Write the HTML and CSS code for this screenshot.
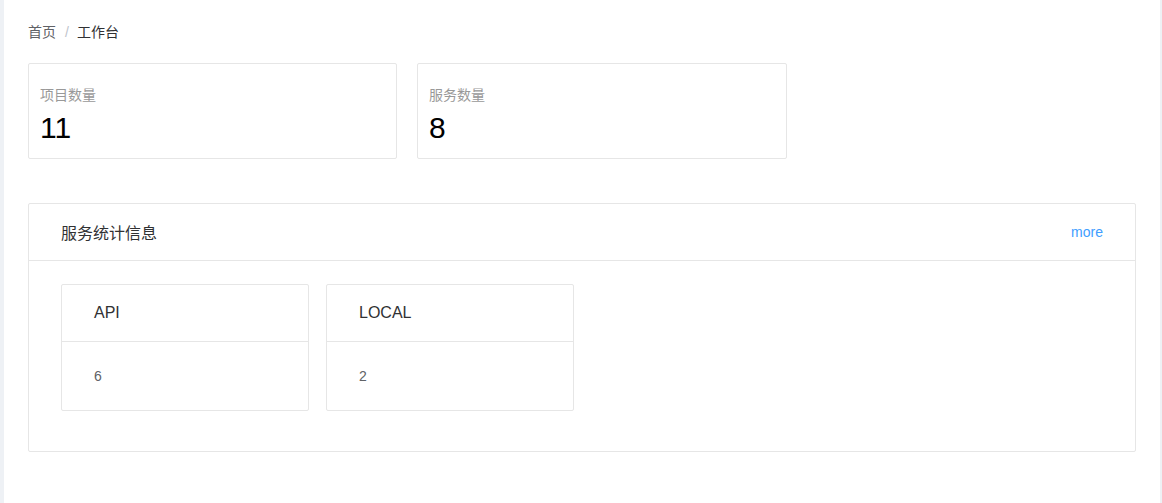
FILE: index.html
```html
<!DOCTYPE html>
<html lang="zh">
<head>
<meta charset="utf-8">
<title>工作台</title>
<link rel="stylesheet" href="styles.css">
</head>
<body>
<main class="main">
  <nav class="breadcrumb">
    <span class="crumb crumb-link">首页</span>
    <span class="crumb-sep">/</span>
    <span class="crumb crumb-current">工作台</span>
  </nav>
  <section class="stats">
    <div class="stat-card">
      <div class="stat-label">项目数量</div>
      <div class="stat-value">11</div>
    </div>
    <div class="stat-card stat-card-wide">
      <div class="stat-label">服务数量</div>
      <div class="stat-value">8</div>
    </div>
  </section>
  <section class="panel">
    <header class="panel-header">
      <span class="panel-title">服务统计信息</span>
      <a class="panel-more">more</a>
    </header>
    <div class="panel-body">
      <div class="svc-card">
        <div class="svc-head">API</div>
        <div class="svc-body">6</div>
      </div>
      <div class="svc-card">
        <div class="svc-head">LOCAL</div>
        <div class="svc-body">2</div>
      </div>
    </div>
  </section>
</main>
</body>
</html>
```
FILE: styles.css
```css
* { box-sizing: border-box; }
html, body { margin: 0; padding: 0; }
body {
  background: #eef1f5;
  font-family: "Liberation Sans", "Noto Sans CJK SC", sans-serif;
  height: 503px;
  overflow: hidden;
}
.main {
  background: #fff;
  margin: 0 2px 0 4px;
  height: 503px;
  padding: 24px 24px 0 24px;
}
.breadcrumb {
  font-size: 14px;
  line-height: 16px;
  height: 16px;
  display: flex;
  align-items: center;
  margin-bottom: 23px;
}
.crumb-link { color: #606266; }
.crumb-sep { color: #c0c4cc; margin: 0 8px 0 9px; }
.crumb-current { color: #303133; }
.stats {
  display: flex;
  gap: 20px;
  margin-bottom: 44px;
}
.stat-card {
  width: 369px;
  height: 96px;
  border: 1px solid #e6e6e6;
  border-radius: 2px;
  padding: 21px 11px 0 11px;
}
.stat-card-wide { width: 370px; }
.stat-label {
  font-size: 14px;
  line-height: 20px;
  color: #999;
}
.stat-value {
  margin-top: 8px;
  font-size: 30px;
  line-height: 30px;
  color: #000;
}
.panel {
  width: 1108px;
  border: 1px solid #e6e6e6;
  border-radius: 2px;
}
.panel-header {
  height: 57px;
  border-bottom: 1px solid #e6e6e6;
  display: flex;
  align-items: center;
  justify-content: space-between;
  padding: 0 32px 0 32px;
}
.panel-title {
  font-size: 16px;
  color: #303133;
}
.panel-more {
  font-size: 14px;
  color: #409eff;
  cursor: pointer;
}
.panel-body {
  display: flex;
  gap: 17px;
  padding: 23px 32px 40px 32px;
}
.svc-card {
  width: 248px;
  border: 1px solid #e6e6e6;
  border-radius: 2px;
}
.svc-head {
  height: 57px;
  border-bottom: 1px solid #e6e6e6;
  display: flex;
  align-items: center;
  padding: 0 32px;
  font-size: 16px;
  color: #303133;
}
.svc-body {
  height: 68px;
  display: flex;
  align-items: center;
  padding: 0 32px;
  font-size: 14px;
  color: #606266;
}
```
